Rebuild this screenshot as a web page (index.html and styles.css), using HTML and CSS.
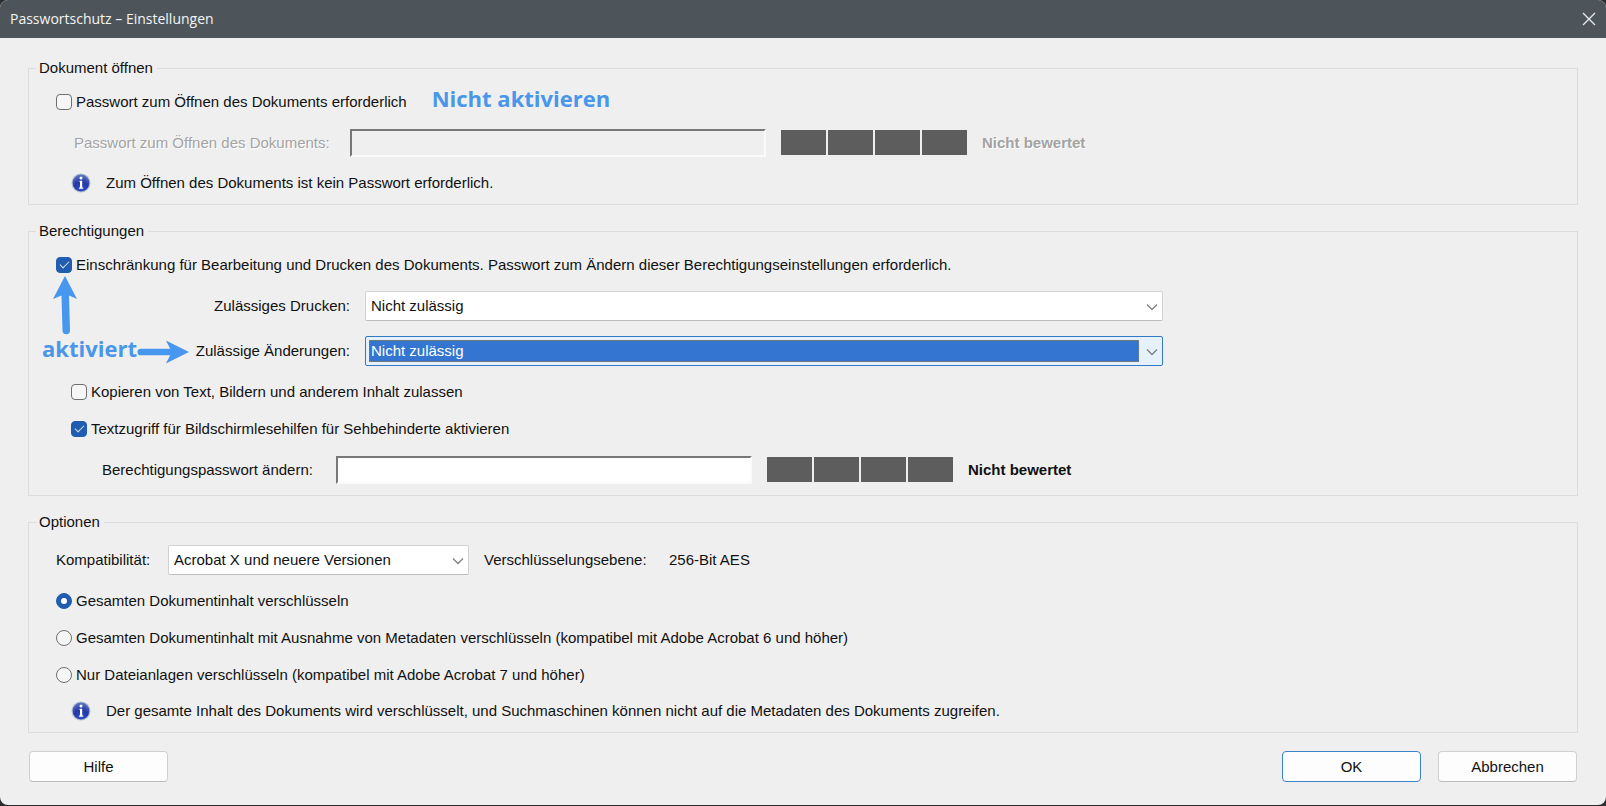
FILE: index.html
```html
<!DOCTYPE html>
<html lang="de">
<head>
<meta charset="utf-8">
<title>Passwortschutz – Einstellungen</title>
<link rel="stylesheet" href="styles.css">
</head>
<body>
<svg class="defs" aria-hidden="true">
  <defs>
    <radialGradient id="ball" cx="50%" cy="85%" r="85%">
      <stop offset="0" stop-color="#2a50d8"/>
      <stop offset="0.5" stop-color="#2338a4"/>
      <stop offset="1" stop-color="#5f78c4"/>
    </radialGradient>
    <symbol id="info" viewBox="0 0 20 20">
      <circle cx="10" cy="10" r="9.500" fill="#b9bdc9"/>
      <circle cx="10" cy="10" r="8.400" fill="url(#ball)"/>
      <circle cx="10" cy="5" r="1.500" fill="#fff"/>
      <path d="M8.500 7.700h2.700v6.800h1v1.200H8v-1.200h1V8.900h-.5z" fill="#fff"/>
    </symbol>
    <symbol id="chevron" viewBox="0 0 12 12">
      <path d="M1 3.500l5 5 5-5" fill="none" stroke="#808080" stroke-width="1.300"/>
    </symbol>
  </defs>
</svg>
<form class="dialog">
  <header class="titlebar">
    <h1 class="title">Passwortschutz – Einstellungen</h1>
    <button class="close" type="button" aria-label="Schließen">
      <svg width="14" height="14" viewBox="0 0 14 14"><path d="M1 1l12 12M13 1L1 13" fill="none" stroke="#e6e8ea" stroke-width="1.400"/></svg>
    </button>
  </header>
  <main class="content">
    <fieldset class="group">
      <legend>Dokument öffnen</legend>
      <div class="row">
        <label class="choice"><input type="checkbox">Passwort zum Öffnen des Dokuments erforderlich</label>
        <strong class="note">Nicht aktivieren</strong>
      </div>
      <div class="row field open-password">
        <label class="muted" for="open-pw">Passwort zum Öffnen des Dokuments:</label>
        <input class="textbox" id="open-pw" type="password" disabled>
        <span class="meter"><i></i><i></i><i></i><i></i></span>
        <b class="muted">Nicht bewertet</b>
      </div>
      <div class="row info"><svg class="info-icon"><use href="#info"/></svg><span>Zum Öffnen des Dokuments ist kein Passwort erforderlich.</span></div>
    </fieldset>

    <fieldset class="group">
      <legend>Berechtigungen</legend>
      <div class="row">
        <label class="choice"><input type="checkbox" checked>Einschränkung für Bearbeitung und Drucken des Dokuments. Passwort zum Ändern dieser Berechtigungseinstellungen erforderlich.</label>
      </div>
      <div class="row field">
        <label class="right-label" for="print">Zulässiges Drucken:</label>
        <span class="combo wide"><select id="print"><option>Nicht zulässig</option></select><svg class="chevron"><use href="#chevron"/></svg></span>
      </div>
      <div class="row field">
        <label class="right-label" for="changes">Zulässige Änderungen:</label>
        <span class="combo wide active"><select id="changes"><option>Nicht zulässig</option></select><svg class="chevron"><use href="#chevron"/></svg></span>
      </div>
      <div class="row nested"><label class="choice"><input type="checkbox">Kopieren von Text, Bildern und anderem Inhalt zulassen</label></div>
      <div class="row nested"><label class="choice"><input type="checkbox" checked>Textzugriff für Bildschirmlesehilfen für Sehbehinderte aktivieren</label></div>
      <div class="row field change-password">
        <label for="perm-pw">Berechtigungspasswort ändern:</label>
        <input class="textbox" id="perm-pw" type="password">
        <span class="meter"><i></i><i></i><i></i><i></i></span>
        <b>Nicht bewertet</b>
      </div>
      <div class="callout">
        <svg class="arrow-up" viewBox="0 0 24 60"><path d="M12 0L24 23L16 19.500L17 55A3.800 3.800 0 0 1 9.500 55L8.500 19.500L0 23Z" fill="#4797ee"/></svg>
        <strong class="note">aktiviert</strong>
        <svg class="arrow-right" viewBox="0 0 54 24"><path d="M54 12L30 24L34.500 15.500H4A3.500 3.500 0 0 1 4 8.500H34.500L30 0Z" fill="#4797ee"/></svg>
      </div>
    </fieldset>

    <fieldset class="group">
      <legend>Optionen</legend>
      <div class="row field compat">
        <label for="compat">Kompatibilität:</label>
        <span class="combo narrow"><select id="compat"><option>Acrobat X und neuere Versionen</option></select><svg class="chevron"><use href="#chevron"/></svg></span>
        <span class="level">Verschlüsselungsebene:</span>
        <span>256-Bit AES</span>
      </div>
      <div class="row"><label class="choice"><input type="radio" name="scope" checked>Gesamten Dokumentinhalt verschlüsseln</label></div>
      <div class="row"><label class="choice"><input type="radio" name="scope">Gesamten Dokumentinhalt mit Ausnahme von Metadaten verschlüsseln (kompatibel mit Adobe Acrobat 6 und höher)</label></div>
      <div class="row"><label class="choice"><input type="radio" name="scope">Nur Dateianlagen verschlüsseln (kompatibel mit Adobe Acrobat 7 und höher)</label></div>
      <div class="row info"><svg class="info-icon"><use href="#info"/></svg><span>Der gesamte Inhalt des Dokuments wird verschlüsselt, und Suchmaschinen können nicht auf die Metadaten des Dokuments zugreifen.</span></div>
    </fieldset>

    <footer class="actions">
      <button class="button help" type="button">Hilfe</button>
      <button class="button primary" type="submit">OK</button>
      <button class="button" type="button">Abbrechen</button>
    </footer>
  </main>
</form>
</body>
</html>
```
FILE: styles.css
```css
* { box-sizing: border-box; }

body {
  margin: 0;
  background: #2b2d2e;
  color: #111;
  font: 15px/18px "Liberation Sans", Arial, sans-serif;
}

input, select, button { font: inherit; color: inherit; margin: 0; }

.defs { position: absolute; width: 0; height: 0; }

.dialog {
  min-height: calc(100vh - 1px);
  background: #efefef;
  border-radius: 8px;
  overflow: hidden;
}

.titlebar {
  display: flex;
  align-items: center;
  justify-content: space-between;
  height: 38px;
  padding: 0 10px;
  background: #4d545a;
  color: #f4f4f4;
}

.title { margin: 0; font: 14px/18px "Open Sans", "Noto Sans", sans-serif; }

.close {
  display: flex;
  padding: 0;
  border: 0;
  background: none;
}

.content {
  display: flex;
  flex-direction: column;
  gap: 17px;
  padding: 21px 28px 20px;
}

.group {
  position: relative;
  min-width: 0;
  margin: 0;
  padding: 6px 27px 3px;
  border: 1px solid #dcdcdc;
}

.group legend { margin-left: -20px; padding: 0 4px 0 3px; }

.row {
  display: flex;
  align-items: center;
  height: 37px;
  white-space: nowrap;
}

.field { height: 45px; gap: 15px; }
.nested { padding-left: 15px; }
.info { height: 36px; padding-left: 15px; gap: 15px; }
.info-icon { width: 20px; height: 20px; }
.open-password { padding-left: 18px; }
.open-password label { width: 261px; }
.change-password { padding-left: 46px; }
.change-password label { width: 219px; }
.compat label { width: 97px; }
.level { width: 170px; }
.right-label { width: 294px; text-align: right; }

.muted { color: #a3a3a3; text-shadow: 1px 1px #fff; }

.choice { display: flex; align-items: center; gap: 4px; }

.choice input {
  appearance: none;
  display: grid;
  place-items: center;
  width: 16px;
  height: 16px;
  border: 1px solid #6f6f6f;
  border-radius: 4px;
  background: #f6f6f6;
}

.choice input:checked { border-color: #205cb0; background: #205cb0; }

.choice input[type="checkbox"]:checked::after {
  content: "";
  width: 8px;
  height: 4px;
  margin-bottom: 3px;
  border: solid #d5e2f5;
  border-width: 0 0 1px 1px;
  transform: rotate(-45deg);
}

.choice input[type="radio"] { border-radius: 50%; }

.choice input[type="radio"]:checked::after {
  content: "";
  width: 6px;
  height: 6px;
  border-radius: 50%;
  background: #fff;
}

.textbox {
  flex: 0 1 416px;
  min-width: 0;
  height: 28px;
  padding: 0 4px;
  border: 2px solid;
  border-color: #777 #fbfbfb #fbfbfb #777;
  background: #fff;
}

.textbox:disabled { background: #efefef; }

.meter { display: flex; gap: 2px; }
.meter i { width: 45px; height: 25px; background: #5d5d5d; }

.combo {
  position: relative;
  display: flex;
  height: 30px;
  border: 1px solid #d2d2d2;
  border-bottom-color: #bdbdbd;
  border-radius: 2px;
  background: #fff;
}

.wide { flex: 0 1 798px; }
.narrow { flex: 0 1 301px; }

.combo select {
  appearance: none;
  flex: 1;
  min-width: 0;
  padding: 0 24px 0 5px;
  border: 0;
  background: none;
}

.chevron {
  position: absolute;
  right: 4px;
  top: 9px;
  width: 12px;
  height: 12px;
  pointer-events: none;
}

.active {
  padding: 3px 23px 3px 3px;
  border: 1px solid #2f7bc8;
  background: #e6f1fb;
}

.active select {
  padding: 0 2px;
  outline: 1px dotted #7c7f80;
  outline-offset: -1px;
  background: #3375d1;
  color: #fff;
}

.note {
  color: #4a97ea;
  font: bold 22px/28px "Open Sans", "Noto Sans", sans-serif;
}

.row .note { margin: -8px 0 0 25px; }

/* Annotation laid over the form fields */
.callout {
  position: absolute;
  left: 13px;
  top: 36px;
  display: grid;
  grid-template-columns: auto auto;
  align-items: center;
}

.arrow-up { grid-column: 1 / 3; width: 24px; height: 60px; margin-left: 11px; }
.callout .note { margin-top: -4px; }
.arrow-right { width: 52px; height: 24px; margin-top: 4px; }

.actions { display: flex; gap: 17px; padding: 1px 1px 0; }

.button {
  width: 139px;
  height: 31px;
  border: 1px solid #d0d0d0;
  border-bottom-color: #bcbcbc;
  border-radius: 4px;
  background: #fdfdfd;
}

.help { margin-right: auto; }
.primary { border-color: #3d82c6; }
```
